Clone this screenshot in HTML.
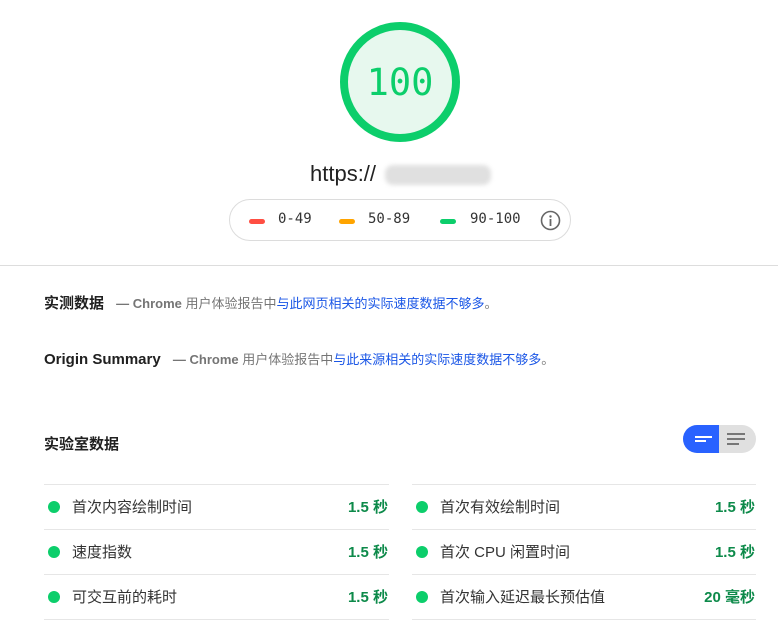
<!DOCTYPE html>
<html><head><meta charset="utf-8"><style>
*{margin:0;padding:0;box-sizing:border-box}
body{width:778px;height:633px;background:#fff;font-family:"Liberation Sans","Noto Sans CJK SC",sans-serif;color:#212121;position:relative;overflow:hidden}
.abs{position:absolute}
.mono{font-family:"DejaVu Sans Mono","Liberation Mono",monospace}
.leg{position:absolute;top:199px;left:229px;width:342px;height:42px;border:1px solid #dcdcdc;border-radius:21px}
.bar{position:absolute;top:19px;width:16px;height:5px;border-radius:3px}
.lt{position:absolute;top:11px;font-size:14px;color:#333}
.sec{position:absolute;left:44px;font-size:15px;font-weight:bold;white-space:nowrap;color:#202020}
.sub{font-size:13px;font-weight:bold;color:#757575;margin-left:8px}
.sub span{font-weight:normal}
.sub a{color:#1a56e6;font-weight:normal;text-decoration:none}
.line{position:absolute;height:1px;background:#e6e6e6}
.row{position:absolute;height:45px;font-size:15px}
.dot{position:absolute;left:4px;top:17px;width:12px;height:12px;border-radius:50%;background:#0cce6b}
.lab{position:absolute;left:28px;top:12px;white-space:nowrap;color:#333}
.val{position:absolute;right:1px;top:12px;font-weight:bold;color:#0d8a4a;white-space:nowrap}
</style></head><body>
<svg class="abs" style="left:338px;top:20px" width="124" height="124"><circle cx="62" cy="62" r="56" fill="#e7f8ee" stroke="#0cce6b" stroke-width="8"/></svg>
<div class="abs mono" style="left:340px;top:61px;width:120px;text-align:center;font-size:37px;line-height:44px;color:#0cce6b">100</div>
<div class="abs" style="left:310px;top:160px;font-size:22px;line-height:28px;color:#222">https://</div>
<div class="abs" style="left:385px;top:165px;width:106px;height:20px;background:#e0e0e0;border-radius:8px;filter:blur(2px)"></div>
<div class="leg">
<div class="bar" style="left:19px;background:#ff4e42"></div><div class="lt mono" style="left:48px">0-49</div>
<div class="bar" style="left:109px;background:#ffa400"></div><div class="lt mono" style="left:138px">50-89</div>
<div class="bar" style="left:210px;background:#0cce6b"></div><div class="lt mono" style="left:240px">90-100</div>
<svg style="position:absolute;left:310px;top:10px" width="21" height="21"><circle cx="10.5" cy="10.5" r="9" fill="none" stroke="#666" stroke-width="1.6"/><circle cx="10.5" cy="6.5" r="1.2" fill="#666"/><rect x="9.6" y="9" width="1.8" height="7" fill="#666"/></svg>
</div>
<div class="line" style="left:0;top:265px;width:778px;background:#ddd"></div>
<div class="sec" style="top:292px">实测数据 <span class="sub">— Chrome <span>用户体验报告中</span><a>与此网页相关的实际速度数据不够多</a><span>。</span></span></div>
<div class="sec" style="top:349px">Origin Summary <span class="sub">— Chrome <span>用户体验报告中</span><a>与此来源相关的实际速度数据不够多</a><span>。</span></span></div>
<div class="sec" style="top:433px">实验室数据</div>
<div class="abs" style="left:683px;top:425px;width:73px;height:28px;border-radius:14px;background:#e0e0e0;overflow:hidden">
<div style="position:absolute;left:0;top:0;width:36px;height:28px;background:#2962ff"></div>
<div style="position:absolute;left:12px;top:11px;width:17px;height:2px;background:#fff"></div>
<div style="position:absolute;left:12px;top:15px;width:11px;height:2px;background:#fff"></div>
<div style="position:absolute;left:44px;top:8px;width:18px;height:2px;background:#777"></div>
<div style="position:absolute;left:44px;top:13px;width:18px;height:2px;background:#777"></div>
<div style="position:absolute;left:44px;top:18px;width:12px;height:2px;background:#777"></div>
</div>
<div class="line" style="left:44px;top:484px;width:345px"></div><div class="line" style="left:412px;top:484px;width:344px"></div>
<div class="line" style="left:44px;top:529px;width:345px"></div><div class="line" style="left:412px;top:529px;width:344px"></div>
<div class="line" style="left:44px;top:574px;width:345px"></div><div class="line" style="left:412px;top:574px;width:344px"></div>
<div class="line" style="left:44px;top:619px;width:345px"></div><div class="line" style="left:412px;top:619px;width:344px"></div>
<div class="row" style="left:44px;top:484px;width:345px"><div class="dot"></div><div class="lab">首次内容绘制时间</div><div class="val">1.5 秒</div></div>
<div class="row" style="left:44px;top:529px;width:345px"><div class="dot"></div><div class="lab">速度指数</div><div class="val">1.5 秒</div></div>
<div class="row" style="left:44px;top:574px;width:345px"><div class="dot"></div><div class="lab">可交互前的耗时</div><div class="val">1.5 秒</div></div>
<div class="row" style="left:412px;top:484px;width:344px"><div class="dot"></div><div class="lab">首次有效绘制时间</div><div class="val">1.5 秒</div></div>
<div class="row" style="left:412px;top:529px;width:344px"><div class="dot"></div><div class="lab">首次 CPU 闲置时间</div><div class="val">1.5 秒</div></div>
<div class="row" style="left:412px;top:574px;width:344px"><div class="dot"></div><div class="lab">首次输入延迟最长预估值</div><div class="val">20 毫秒</div></div>
</body></html>
